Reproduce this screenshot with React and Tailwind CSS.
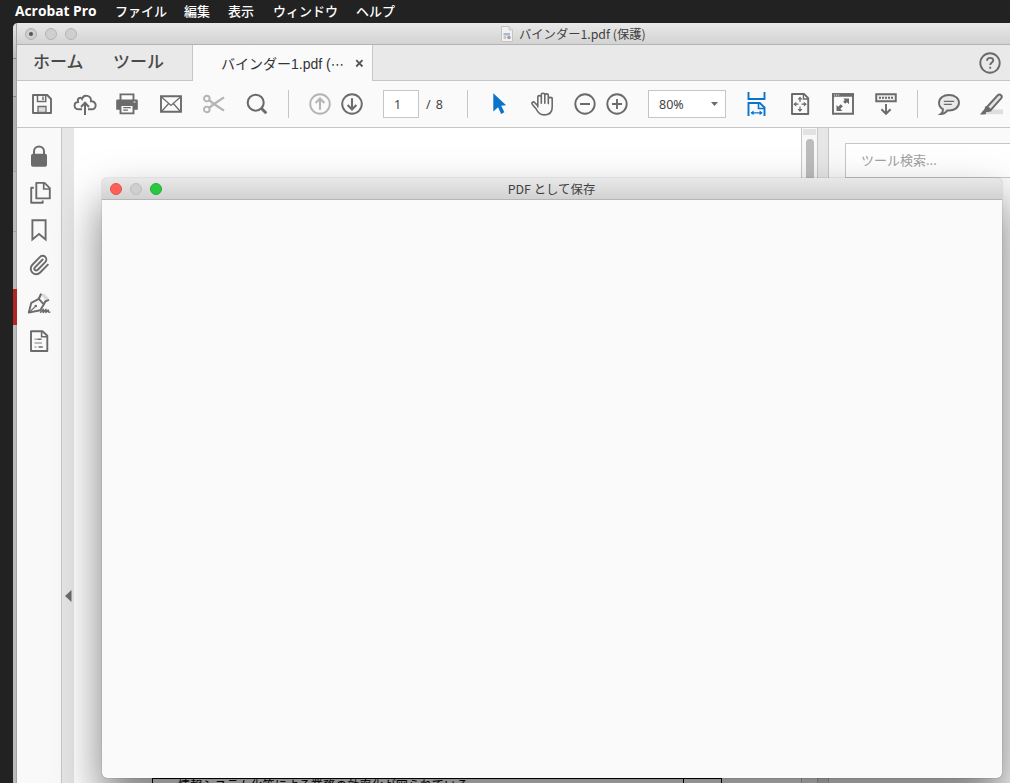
import React from "react";
import { Paperclip } from "lucide-react";

const Icon = ({ children, className = "text-[#6b6b6b]", size = 24 }) => (
  <svg
    width={size}
    height={size}
    viewBox="0 0 24 24"
    fill="none"
    stroke="currentColor"
    strokeWidth="1.9"
    className={`block shrink-0 ${className}`}
  >
    {children}
  </svg>
);

const Divider = () => <div className="h-7 w-px shrink-0 bg-[#c6c6c6]" />;

const MenuBar = () => (
  <div className="flex h-[23px] shrink-0 items-center bg-[#222222] pb-[3px] pl-[15px] text-[13px] leading-none font-medium text-white">
    <span className="w-[100px] pt-[2px] font-['Open_Sans','Noto_Sans_CJK_JP',sans-serif] text-[13.8px] font-bold whitespace-nowrap">Acrobat Pro</span>
    <span className="w-[69px]">ファイル</span>
    <span className="w-[44px]">編集</span>
    <span className="w-[45px]">表示</span>
    <span className="w-[83px]">ウィンドウ</span>
    <span>ヘルプ</span>
  </div>
);

const TitleBar = () => (
  <div className="flex h-[22px] shrink-0 items-center border-b border-[#b3b3b3] bg-linear-to-b from-[#e9e9e9] to-[#d3d3d3] pl-[8px]">
    <div className="flex gap-2">
      <span className="flex size-3 items-center justify-center rounded-full border border-[#b0b0b0] bg-[#cfcfcf]">
        <span className="size-1 rounded-full bg-[#555]" />
      </span>
      <span className="size-3 rounded-full border border-[#b4b4b4] bg-[#cfcfcf]" />
      <span className="size-3 rounded-full border border-[#b4b4b4] bg-[#cfcfcf]" />
    </div>
    <div className="ml-[424px] flex items-center gap-[6px]">
      <svg width="12" height="16" viewBox="0 0 12 16" className="block shrink-0">
        <path d="M.5.5h7.5l3.5 3.5v11.5H.5z" fill="#f1f1f1" stroke="#c4c4c4" />
        <path d="M8 .5V4h3.5" fill="#ddd" stroke="#c9c9c9" />
        <path d="M2.5 7h6.5v2.5H2.5z" fill="#a9b9cf" />
        <circle cx="4" cy="11.5" r="1.5" fill="#d6bcbc" />
        <circle cx="8" cy="11.5" r="1.7" fill="#9b9ea6" />
      </svg>
      <span className="pt-px text-[12.3px] leading-none whitespace-nowrap text-[#404040]">バインダー1.pdf (保護)</span>
    </div>
  </div>
);

const Tabs = () => (
  <div className="flex h-9 shrink-0">
    <div className="flex w-44 shrink-0 border-r border-b border-[#c6c6c6] bg-[#e9e9e9] pt-[7px] pl-[16px] text-[17px] leading-none font-medium text-[#4a4a4a]">
      <span className="w-[80px]">ホーム</span>
      <span>ツール</span>
    </div>
    <div className="flex w-[179px] shrink-0 items-center bg-[#fafafa] pl-[28px] text-[#333]">
      <span className="flex w-[134px] items-center pt-[2px] font-['Liberation_Sans','Noto_Sans_CJK_JP',sans-serif] text-[14px] leading-none whitespace-nowrap">
        <span>バインダー1.pdf (</span>
        <span className="font-['DejaVu_Sans',sans-serif] text-[13px]">⋯</span>
      </span>
      <svg width="9" height="9" viewBox="0 0 9 9" stroke="#555" strokeWidth="1.8" className="block">
        <path d="M1.2 1.2l6.3 6.3M7.5 1.2L1.2 7.5" />
      </svg>
    </div>
    <div className="flex grow items-center justify-end border-b border-l border-[#c6c6c6] bg-[#e9e9e9] pr-[8px]">
      <Icon>
        <circle cx="12" cy="12" r="9.7" />
        <path d="M9 9.8c0-4 6.2-3.6 6.2-.4 0 2.1-3 2.2-3 4.7" />
        <path d="M12.2 15.7v2.1" />
      </Icon>
    </div>
  </div>
);

const Toolbar = () => (
  <div className="flex h-[47px] shrink-0 items-center gap-[19px] border-b border-[#c6c6c6] bg-[#fafafa] pl-[13px]">
    {/* save */}
    <Icon>
      <path d="M3 3h14.2L21 7v14H3z" strokeLinejoin="round" />
      <path d="M7.5 3v6.4h8.2V3" strokeWidth="1.5" />
      <path d="M13 4.5V8" strokeWidth="1.5" />
      <path d="M8 20.5v-6h8v6z" fill="#dcdcdc" strokeWidth="1.3" />
    </Icon>
    {/* upload */}
    <Icon className="-mr-px text-[#6b6b6b]">
      <path d="M9 17.3H6c-6 0-5.5-7-.9-7.3C3.8 6 7.7 4.9 9 6.9c1.7-5.5 9.8-3.3 8.9 2.4 6.4-.2 6 8 .9 8H15" />
      <path d="M12 23V11.3M8 15l4-4.2 4 4.2" strokeWidth="2" />
    </Icon>
    {/* print */}
    <Icon className="mr-px text-[#6b6b6b]">
      <path d="M5.5 8V2.4h13V8" />
      <path d="M1.2 8.7q0-1.2 1.2-1.2h19.2q1.2 0 1.2 1.2v9.1H1.2z" fill="currentColor" stroke="none" />
      <path d="M5.5 13h13v8.4h-13z" fill="#fafafa" />
      <path d="M8.2 15.6h7.6M8.2 18.2h4.7" strokeWidth="1.2" />
      <path d="M18.5 10h2" stroke="#fff" strokeWidth="1.2" />
    </Icon>
    {/* mail */}
    <Icon>
      <path d="M2 4.2h20v15.6H2z" />
      <path d="M2.5 5l9.5 8.5L21.5 5M3 19l6.5-7.3M21 19l-6.5-7.3" strokeWidth="1.3" />
    </Icon>
    {/* cut */}
    <Icon className="text-[#b4b4b4]">
      <circle cx="4.8" cy="6.6" r="2.8" />
      <circle cx="4.8" cy="17.4" r="2.8" />
      <path d="M7.2 8.2l4 3.3L22 18.6M7.2 15.8l4-3.3L22 5.4" strokeWidth="2.3" />
    </Icon>
    {/* find */}
    <Icon>
      <circle cx="10.7" cy="10.7" r="8" strokeWidth="2.1" />
      <path d="M16.3 16.3l5 5" strokeWidth="2.9" />
    </Icon>
    <Divider />
    <div className="flex gap-2">
      <Icon className="text-[#b4b4b4]">
        <circle cx="12" cy="12" r="9.8" />
        <path d="M12 17.7V7M7.6 11L12 6.6l4.4 4.4" strokeWidth="2.1" />
      </Icon>
      <Icon>
        <circle cx="12" cy="12" r="9.8" />
        <path d="M12 6.3V17M7.6 13l4.4 4.4 4.4-4.4" strokeWidth="2.1" />
      </Icon>
    </div>
    <div className="flex w-[65px] shrink-0 items-center font-['Noto_Sans'] text-[12.5px] leading-none text-[#444]">
      <span className="flex h-7 w-9 items-center border border-[#c6c6c6] bg-white pt-[2px] pl-[10px]">1</span>
      <span className="pt-[3px] pl-[7px]">/</span>
      <span className="pt-[3px] pl-[5px]">8</span>
    </div>
    <Divider />
    <Icon className="ml-px text-[#0a73cc]">
      <path d="M5.3 1.2l12.8 12.1-4.9.4 3.2 6.6-3.3 1.6-3-6.6-4.8 4.2z" fill="currentColor" stroke="none" />
    </Icon>
    {/* hand */}
    <Icon className="-mr-px text-[#6b6b6b]">
      <path
        d="M6.8 15.5V5.3c0-2.2 3.5-2.2 3.5 0v5.9V2.9c0-2.2 3.5-2.2 3.5 0v8.3V3.5c0-2.2 3.5-2.2 3.5 0v8.1V6.9c0-2.1 3.9-2.1 3.9 0v8.3c0 5-3 7.7-8.2 7.7-4.3 0-6-1.9-7.6-5.6L1.4 12.4C.2 10.6 2.2 9 3.9 10.7l2.9 3.2"
        strokeWidth="1.6"
        strokeLinejoin="round"
      />
    </Icon>
    <div className="flex gap-2">
      <Icon>
        <circle cx="12" cy="12" r="9.7" />
        <path d="M7 12h10" />
      </Icon>
      <Icon>
        <circle cx="12" cy="12" r="9.7" />
        <path d="M7 12h10M12 7v10" />
      </Icon>
    </div>
    <div className="flex h-7 w-[78px] shrink-0 items-center justify-between border border-[#c6c6c6] bg-white pr-[7px] pl-[10px] font-['Noto_Sans'] text-[12.5px] leading-none text-[#444]">
      <span className="pt-[2px]">80%</span>
      <svg width="7" height="4" viewBox="0 0 7 4" className="block">
        <path d="M0 0h7L3.5 4z" fill="#6b6b6b" />
      </svg>
    </div>
    {/* fit width, scrolling */}
    <Icon className="text-[#0a73cc]">
      <path d="M4 0v7h16V0M4 24V11h11.3L20 15.5V24" transform="translate(-.5 0)" />
      <path d="M14 11v5.5h5.5" strokeWidth="1.6" transform="translate(-.5 0)" />
      <path d="M6.2 20.8h10.8" strokeWidth="1.3" />
      <path d="M8.6 18.4v4.8l-3-2.4zM14.6 18.4v4.8l3-2.4z" fill="currentColor" stroke="none" />
    </Icon>
    {/* fit page */}
    <Icon>
      <path d="M4 2h12l4.2 4.2V22H4z" strokeLinejoin="round" />
      <path d="M15.4 2v5h5" strokeWidth="1.4" />
      <path d="M12 6v4M12 14.5v4M6.5 12.2h4M13.5 12.2h4" strokeWidth="1.2" />
      <path d="M12 4.6l2.4 3H9.6zM12 20l2.4-3H9.6zM5.3 12.2l3-2.4v4.8zM18.8 12.2l-3-2.4v4.8z" fill="currentColor" stroke="none" />
    </Icon>
    {/* full screen */}
    <Icon>
      <path d="M2 2.2h20v19.6H2z" />
      <path d="M1 1.2h22v3.6H1z" fill="currentColor" stroke="none" />
      <path d="M3.2 3h1M5.2 3h1M7.2 3h1" stroke="#fff" strokeWidth="1" />
      <path d="M8 16l2.8-2.8M13.2 10.8L16 8" strokeWidth="3" />
      <path d="M12.2 6.5H18v5.8zM5.5 13v6h6z" fill="currentColor" stroke="none" />
    </Icon>
    {/* read mode */}
    <Icon>
      <path d="M2.2 2.2h19.6v7H2.2z" fill="#eee" />
      <path d="M5 5.8h14" strokeWidth="2" strokeDasharray="2 1" />
      <path d="M12 12v9.5M7.4 17.3l4.6 4.5 4.6-4.5" />
    </Icon>
    <Divider />
    {/* comment */}
    <Icon>
      <path d="M12 3C6 3 2 6.2 2 10.8c0 3 1.7 5.2 3.9 6.4C6 19.3 5.2 21 3.7 22c3 0 5.3-1.6 6.5-3.6 7 .7 11.8-2.8 11.8-7.8C22 6.2 18 3 12 3z" fill="#e9e9e9" />
      <path d="M6.8 9.3h10.4M6.8 12.3h8" strokeWidth="1.2" />
    </Icon>
    {/* highlight */}
    <Icon>
      <path d="M9 17.5h14v4.7H5z" fill="#dedede" stroke="none" />
      <path d="M7 15L17.5 3.5c2.6-2.4 5.6.6 3.6 3L10.8 18z" fill="#e4e4e4" />
      <path d="M5.6 14l6 5.2-3.5.8-5 .3z" fill="currentColor" stroke="none" />
      <path d="M3.5 18L0 22.4h5.2l1.2-1.7z" fill="currentColor" stroke="none" />
    </Icon>
  </div>
);

const SideRail = () => (
  <div className="flex w-[45px] shrink-0 flex-col items-center gap-[13px] border-r border-[#c6c6c6] bg-[#f9f9f9] pt-[16px]">
    <Icon>
      <path d="M7 11V7.5C7 .8 17 .8 17 7.5V11" strokeWidth="2" />
      <rect x="4" y="9.8" width="16" height="13" rx="2" fill="currentColor" stroke="none" />
    </Icon>
    <Icon className="ml-px text-[#6b6b6b]">
      <path d="M8.3 1.9h8.2l5.3 5.2v10.3H8.3z" strokeLinejoin="round" />
      <path d="M15.7 2v6h6" strokeWidth="1.7" />
      <path d="M5.8 6.8H3.2v15h11.5v-2.4" strokeLinejoin="round" />
    </Icon>
    <Icon>
      <path d="M5.4 2.2h13.2v19.2L12 16l-6.6 5.4z" />
    </Icon>
    <Paperclip size={22} strokeWidth={2.1} className="-mt-px mr-px block shrink-0 text-[#6b6b6b]" />
    {/* signatures */}
    <Icon className="mt-[3px] text-[#6b6b6b]">
      <path d="M13.7 2.8l5 5.2 3-1.5-4.6-5z" fill="#d9d9d9" stroke="none" />
      <path d="M1.8 20.6L4.3 10.8l7.5-4 5 5.6-3.6 5.8z" strokeLinejoin="round" />
      <path d="M11.6 7.2l2.6-5.6M16.6 12.6l1.8-3.2 3.6-1.5" strokeWidth="2.1" />
      <path d="M2.2 20.4l6-5.8" strokeWidth="1.3" />
      <circle cx="8.8" cy="14" r="1.3" fill="currentColor" stroke="none" />
      <path d="M13.2 20.8l3.2-3.6-.2 3.4 2.8-3.2-.1 3 2.3-2.4.3 2 1.8.2" strokeWidth="1.5" strokeLinejoin="round" />
    </Icon>
    <Icon>
      <path d="M4 2.2h11.5l4.8 4.6V22H4z" strokeLinejoin="round" />
      <path d="M14.6 2.4v5.4h5.4" strokeWidth="1.6" />
      <path d="M7.5 10.2h3M7.5 14h7.5M7.5 18h2" stroke="#a8a8a8" strokeWidth="1.5" />
      <path d="M10.5 10.2h4M11.5 18h4.3" strokeWidth="1.5" />
    </Icon>
  </div>
);

const DocumentView = () => (
  <div className="flex w-[727px] shrink-0 flex-col justify-end bg-white">
    <div className="mb-[-12px] ml-[78px] flex h-[17px] w-[570px] border-x border-t border-black pl-[25px]">
      <span className="w-[505px] text-[12.15px] leading-none whitespace-nowrap text-black">
        情報システム化等による業務の効率化が図られている
      </span>
      <div className="w-px shrink-0 bg-black" />
    </div>
  </div>
);

const ToolPanel = () => (
  <div className="grow bg-[#fafafa] pt-[15px] pl-4">
    <div className="flex h-[35px] items-center border border-r-0 border-[#c6c6c6] bg-white pb-[2px] pl-[15px] text-[13px] leading-none text-[#a0a0a0]">
      ツール検索...
    </div>
  </div>
);

const SaveDialog = () => (
  <div className="absolute top-[178px] left-[102px] flex h-[600px] w-[900px] flex-col overflow-hidden rounded-[5px] bg-[#fafafa] shadow-[0_0_1px_rgba(0,0,0,0.6),0_24px_46px_rgba(0,0,0,0.53)]">
    <div className="grid h-[22px] shrink-0 grid-cols-[1fr_auto_1fr] items-center border-b border-[#b6b6b6] bg-linear-to-b from-[#e8e8e8] to-[#d2d2d2] px-2">
      <div className="flex gap-2">
        <span className="size-3 rounded-full border border-[#e3524d] bg-[#ff5f57]" />
        <span className="size-3 rounded-full border border-[#bcbcbc] bg-[#cfcfcf]" />
        <span className="size-3 rounded-full border border-[#24ab38] bg-[#28c840]" />
      </div>
      <span className="pt-px pr-px text-[12.4px] leading-none text-[#404040]">PDF として保存</span>
    </div>
  </div>
);

const App = () => {
  return (
    <div className="relative flex h-[783px] w-[1010px] flex-col overflow-hidden bg-[#222222] font-['Noto_Sans_CJK_JP',sans-serif]">
      <MenuBar />
      <div className="ml-[13px] flex min-h-0 grow overflow-hidden rounded-tl-[5px]">
        {/* edge of the window behind */}
        <div className="flex w-1 shrink-0 flex-col border-r border-[#a4a4a4] bg-[#bababa]">
          <div className="h-9 shrink-0 border-b border-[#858585] bg-linear-to-b from-[#e4e4e4] to-[#bcbcbc]" />
          <div className="h-[38px] shrink-0 border-b border-[#858585]" />
          <div className="h-[75px] shrink-0 border-b border-[#a0a0a0] bg-[#b2b2b2]" />
          <div className="h-[60px] shrink-0 border-b border-[#a0a0a0]" />
          <div className="mt-[57px] h-9 w-1 shrink-0 bg-[#b32424]" />
        </div>
        <div className="flex min-w-0 grow flex-col">
          <TitleBar />
          <Tabs />
          <Toolbar />
          <div className="flex min-h-0 grow">
            <SideRail />
            <div className="flex w-3 shrink-0 items-center bg-[#e6e6e6] pt-[280px] pl-[3px]">
              <svg width="7" height="12" viewBox="0 0 7 12" className="block">
                <path d="M6.5 0v12L0 6z" fill="#6b6b6b" />
              </svg>
            </div>
            <DocumentView />
            <div className="flex w-[17px] shrink-0 flex-col items-center border-x border-[#c6c6c6] bg-[#f8f8f8] pt-px">
              <div className="h-[6px] w-[13px] shrink-0 bg-[#e2e2e2]" />
              <div className="mt-1 h-[120px] w-2 rounded-full bg-[#bcbcbc]" />
            </div>
            <div className="w-[11px] shrink-0 border-r border-[#c6c6c6] bg-[#e6e6e6]" />
            <ToolPanel />
          </div>
        </div>
      </div>
      <SaveDialog />
    </div>
  );
};

export default App;
